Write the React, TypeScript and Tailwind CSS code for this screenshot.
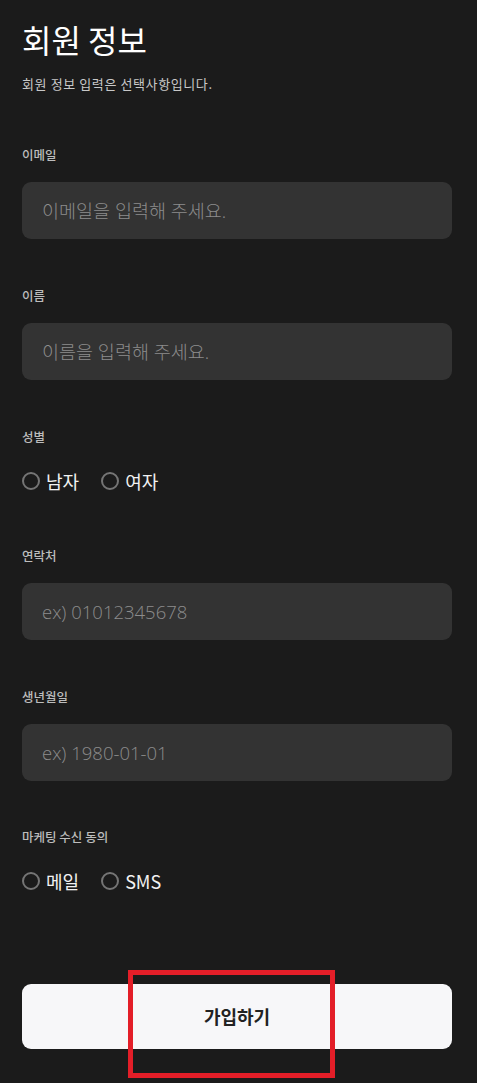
const font = { fontFamily: '"Noto Sans CJK KR", "Noto Sans", sans-serif' };
const inputFont = { fontFamily: '"Open Sans", "Noto Sans CJK KR", sans-serif' };

const Label = ({ children, className = '' }: { children: string; className?: string }) => (
  <div className={`text-[12.5px] leading-[20px] font-medium text-[#bdbdbd] ${className}`}>{children}</div>
);

const Field = ({ placeholder }: { placeholder: string }) => (
  <div className="mt-[17px] h-[57px] w-full rounded-[9px] bg-[#333333] flex items-center px-[20px]">
    <span className="text-[18.5px] font-light text-[#8c8c8c]" style={inputFont}>
      {placeholder}
    </span>
  </div>
);

const Radio = ({ label }: { label: string }) => (
  <div className="flex items-center gap-[6px]">
    <span className="w-[18px] h-[18px] rounded-full border-2 border-[#757575]" />
    <span className="text-[18px] text-[#f2f2f2] leading-[24px]">{label}</span>
  </div>
);

export default function App() {
  return (
    <div className="min-h-[1083px] w-full bg-[#1b1b1b] pl-[22px] pr-[25px] pt-[19px]" style={font}>
      <h1 className="text-[32px] leading-[40px] text-white font-normal">회원 정보</h1>
      <p className="mt-[16px] text-[13px] leading-[18px] tracking-[0.6px] text-[#c8c8c8]">
        회원 정보 입력은 선택사항입니다.
      </p>

      <Label className="mt-[52px]">이메일</Label>
      <Field placeholder="이메일을 입력해 주세요." />

      <Label className="mt-[47px]">이름</Label>
      <Field placeholder="이름을 입력해 주세요." />

      <Label className="mt-[47px]">성별</Label>
      <div className="mt-[22px] flex items-center gap-[22px] h-[24px]">
        <Radio label="남자" />
        <Radio label="여자" />
      </div>

      <Label className="mt-[53px]">연락처</Label>
      <Field placeholder="ex) 01012345678" />

      <Label className="mt-[47px]">생년월일</Label>
      <Field placeholder="ex) 1980-01-01" />

      <Label className="mt-[46px]">마케팅 수신 동의</Label>
      <div className="mt-[22px] flex items-center gap-[22px] h-[24px]">
        <Radio label="메일" />
        <Radio label="SMS" />
      </div>

      <div className="relative mt-[91px]">
        <button className="w-full h-[65px] rounded-[9px] bg-[#f7f7f9] text-[18px] font-bold text-[#222222]">
          가입하기
        </button>
        <div className="absolute top-[-14px] left-[106px] w-[207px] h-[108px] border-[5px] border-[#e31e28] pointer-events-none" />
      </div>
    </div>
  );
}
